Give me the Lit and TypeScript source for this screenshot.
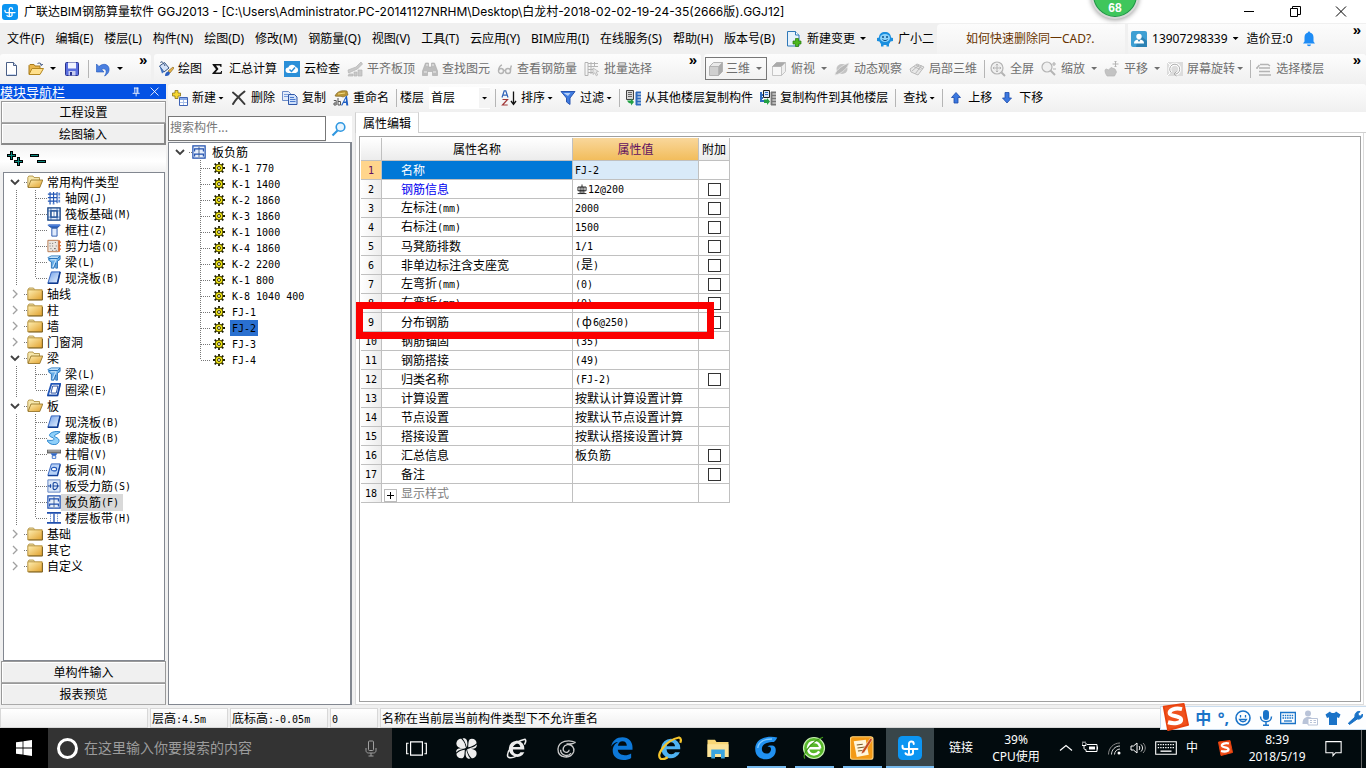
import { LitElement, html, svg, css, nothing } from "lit";
import { customElement, state } from "lit/decorators.js";
import { classMap } from "lit/directives/class-map.js";

/* ---------- icon drawings, all on a 16 x 16 grid ---------- */
const G = "#b4b4b4";
const icons: Record<string, unknown> = {
  app: svg`<rect width="16" height="16" rx="3" fill="#0c95f2"/><path d="M7.300 11.500V5.300a1.600 1.600 0 0 1 3.200 0M3 6.500v.6a1.500 1.500 0 0 0 1.500 1.500h8.500M5 11.500c.6 1.400 4.400 1.400 5 0V8.600" fill="none" stroke="#fff" stroke-width="1.300" stroke-linecap="round"/>`,
  newDoc: svg`<path d="M2.500 1.500h7l3 3v10h-10z" fill="#fff" stroke="#4a5f86"/><path d="M9.500 1.500v3h3" fill="#cfdcf2" stroke="#4a5f86"/><path d="M3.500 13.500h8" stroke="#c5d4ee"/>`,
  open: svg`<path d="M1 13V4.500L2 3.500h4l1 1.500h5v3" fill="#e9b64c" stroke="#a77a1c"/><path d="m1 13.500 3-6h11.500l-3.500 6z" fill="#ffe08c" stroke="#b4871f"/><path d="M9.500 2.500c2-1 3.500-.5 4 1.500M12 3.500l1.600 1 1.200-1.500" fill="none" stroke="#4a5f86"/>`,
  save: svg`<rect x="1.500" y="1.500" width="13" height="13" rx="1" fill="#5a6ede" stroke="#28338f"/><path d="M4 1.500h8v6H4z" fill="#f2f4ff"/><path d="M4.500 10h7v4.500h-7z" fill="#c8cdf0"/><path d="M6 11h2v3.500H6z" fill="#28338f"/>`,
  undo: svg`<path d="M4 5.500c5-4.500 11-1.500 10 4-.3 2.500-2.300 4.500-4.500 5.500 2-2.500 2.500-6 0-7-1.200-.4-2 .1-2.700.6L9 11H1.500V3z" fill="#4a7fe0" stroke="#1f55b8" stroke-width=".6"/>`,
  paint: svg`<path d="M1.500 5l5-3.500 4.500 5.500-5 4z" fill="#d4e2f8" stroke="#35527f"/><path d="M3 2c-1-2 2-2 4 3" fill="none" stroke="#35527f"/><path d="M1.500 5l4.500 6-2 1.500z" fill="#3d72c4"/><path d="m10 10 5-4 1 1-4 5z" fill="#e9b64c" stroke="#7d5c17" stroke-width=".6"/><path d="M7 15c0-3 1.500-4.500 3.500-4.500l1.500 1.500c-.5 2-2 3.500-5 3z" fill="#2a5fc0"/>`,
  sigma: svg`<path d="M3.500 3h9v3h-1c-.2-1-.6-1.500-1.500-1.500H7L9.500 8 6.500 11.500H10.500c1 0 1.400-.6 1.600-1.600h1L12.700 13H3.300v-.8L7 8.200 3.500 3.800z" fill="#111"/>`,
  cloud: svg`<rect width="16" height="16" fill="#2a8fd8"/><path d="M4.500 12a2.800 2.800 0 0 1-.3-5.600 4 4 0 0 1 7.500-.3 3 3 0 0 1 0 5.900z" fill="#fff"/><path d="m5.500 8.500 2 2 3.500-4" fill="none" stroke="#2a8fd8" stroke-width="1.500"/>`,
  align: svg`<path d="M1 9l8-3 5-5 1.500 2-5 5-9 4zM2 13h4v2H1zM7 11h3v4H7zM11 9h4v6h-4z" fill="#c9c9c9" stroke="${G}" stroke-width=".7"/>`,
  binoc: svg`<path d="M3.500 2h3v4h3V2h3l3 8v4.500h-5v-4h-5v4h-5V10z" fill="#bdbdbd" stroke="#a9a9a9" stroke-width=".6"/><path d="M2 11h3M11 11h3M4 4h2M10 4h2" stroke="#eee"/>`,
  glasses: svg`<g fill="none" stroke="${G}" stroke-width="1.400"><circle cx="4" cy="10" r="2.500"/><circle cx="11" cy="10" r="2.500"/><path d="M6.500 9.500h2M1.500 9.500C2 6 3 4.500 5 4M13.500 9.500c0-3 .3-4 1-5"/></g>`,
  batch: svg`<path d="M1 1.500h3v13H1zM4 2.500h10M4 5.500h10M4 8.500h5M4 11.500h5M7 1v12M10.500 1v5" fill="none" stroke="${G}"/><path d="m9 7 5.500 3.500-2.300.5 1.500 3-1.400.8-1.500-3L9 13.500z" fill="#e9e9e9" stroke="${G}" stroke-width=".8"/>`,
  cube: svg`<path d="M1.500 5.500h9v9h-9z" fill="#cfcfcf" stroke="${G}"/><path d="m1.500 5.500 4-4h9l-4 4z" fill="#e9e9e9" stroke="${G}"/><path d="m10.500 5.500 4-4v9l-4 4z" fill="#ababab" stroke="${G}"/>`,
  topView: svg`<path d="M1.500 5.500h9v9h-9z" fill="#f7f7f7" stroke="#c5c5c5"/><path d="m1.500 5.500 4-4h9l-4 4z" fill="#aaa" stroke="${G}"/><path d="m10.500 5.500 4-4v9l-4 4z" fill="#eee" stroke="#c5c5c5"/>`,
  orbit: svg`<ellipse cx="8" cy="8" rx="5.500" ry="5" fill="#c4c4c4"/><path d="M1 14c0-3 5-9 14-12-1 4-7 11-14 12z" fill="#b9b9b9" stroke="#e6e6e6" stroke-width=".8"/>`,
  local3d: svg`<g fill="#e8e8e8" stroke="${G}" stroke-width=".9"><path d="m1 8 7-5 7 3-6 8-7-3z"/><path d="m4.500 5.500 7 3M7 4l7 4M3 10l7-6M6.500 12.500l6-8"/></g>`,
  fullscreen: svg`<circle cx="7" cy="7" r="6" fill="#f0f0f0" stroke="${G}" stroke-width="1.200"/><path d="M7 3v8M3 7h8M5.800 4.200 7 3l1.200 1.200M5.800 9.800 7 11l1.200-1.200M4.200 5.800 3 7l1.200 1.200M9.800 5.800 11 7 9.800 8.200" fill="none" stroke="${G}"/><path d="m11.500 11.500 3.500 3.500" stroke="${G}" stroke-width="2"/>`,
  zoom: svg`<circle cx="6" cy="6" r="5" fill="#f0f0f0" stroke="${G}" stroke-width="1.200"/><path d="m9.500 9.500 4.500 4.500" stroke="${G}" stroke-width="2"/><path d="M11 3h4M13 1v4M12 8h3" stroke="${G}" stroke-width="1.200"/>`,
  pan: svg`<path d="M3 15c-2-3-3-7-.5-7l2 1L7 6.500l4 1.500 1.500 3-2 4z" fill="#c3c3c3" stroke="${G}" stroke-width=".7"/><path d="M11.500 0v6M8.500 3h6M10.500 1l1-1 1 1M10.500 5l1 1 1-1" stroke="${G}" fill="none"/>`,
  rotate: svg`<path d="M0 1h16v14H0z" fill="#dcdcdc"/><path d="M4 11.500a5 5 0 1 1 5 1.500" fill="none" stroke="#fff" stroke-width="3"/><path d="M4 11.500a5 5 0 1 1 5 1.500M9.500 10.500 7 13l2.500 2" fill="none" stroke="#aaa"/><path d="M0 1l3 3M0 15l3-3" stroke="#fff"/>`,
  floors: svg`<path d="M4 3.500h8l2 1.500M3 7h11M3 10.500h11M3 14h12M1 7l2.500-3M1 6v2" fill="none" stroke="${G}" stroke-width="1.500"/>`,
  add: svg`<path d="M3 .5h3v2.500h2.500v3H6v2.500H3V6H.5V3H3z" fill="#f5d633" stroke="#8a7411" stroke-width=".8"/><path d="M7.500 7.500h8v8h-8z" fill="#fff" stroke="#3e63b4"/><path d="M8 8h7v2H8z" fill="#86a8e8"/><path d="M8 12.500h7M11.500 10v5" stroke="#a9c0ea"/>`,
  del: svg`<path d="M2 2.500c4 3 8 7 11.500 11.500M13.500 1.500C9 5 5 9 2 14" fill="none" stroke="#3a3a3a" stroke-width="2" stroke-linecap="round"/>`,
  copy: svg`<path d="M.5 1.500h6l2 2v7h-8z" fill="#e3ecfb" stroke="#6c8cc8"/><path d="M2 4.500h4M2 6.500h4" stroke="#7da0dc"/><path d="M6.500 4.500h6l2.500 2.500v7.500H6.500z" fill="#cfe0fa" stroke="#2f57a8"/><path d="M8 7.500h4M8 9.500h5.500M8 11.500h5.500" stroke="#4a79cc"/>`,
  rename: svg`<path d="M2 6C4 1 9 0 14 1l1 4-5 2c-3-1.500-5 0-8-1z" fill="#b89436" stroke="#776022" stroke-width=".6"/><path d="M5 4l7-1" stroke="#f2dc84"/><path d="M.8 10.500h2.400V15H1v-2h2M5 8v7h2.500v-3.500H5" fill="none" stroke="#555"/><path d="M8 15.500 13 6h1l1.300 9.500h-2l-.3-2.500h-2.500l-1.200 2.500zM11.200 11.500H13l-.2-3z" fill="#1f5fc4"/>`,
  sort: svg`<path d="M1 7.500 3.200.8h1.600L7 7.500M2 5.200h4" fill="none" stroke="#2f62b8" stroke-width="1.200"/><path d="M1.500 9.500h5l-5 5.500h5.200" fill="none" stroke="#a23a3a" stroke-width="1.200"/><path d="M12.500 1.500v12M10 11l2.500 3.500L15 11" fill="none" stroke="#111" stroke-width="1.300"/>`,
  filter: svg`<path d="M1 1.500h14L10 8v6.500L6.500 12V8z" fill="#3f7be0" stroke="#2a56b0"/><path d="M3.500 3h7L8 6z" fill="#b6d0f8"/>`,
  copyFrom: svg`<path d="M1.500.5h7v9h-7z" fill="#d8d8d8" stroke="#444"/><path d="M3 2.500h4M3 4.500h4M3 6.500h4" stroke="#666"/><path d="m2 10.500 4 0v-2l3 3.500-3 3.500v-2c-2 0-3-1-4-3z" fill="#23a045"/><path d="M11.500 2v13M11 2.500h5M11 5.500h5M11 8.500h5M11 11.500h5M11 14.500h5" stroke="#2f6cc0" stroke-width="2"/>`,
  copyTo: svg`<path d="M3.500.5h6v7h-6z" fill="#dce8fa" stroke="#222"/><path d="M5 2.500h3M5 4.500h3" stroke="#2f6cc0"/><path d="M1 2v9l3 0M1 5h2M1 8h2" stroke="#2f6cc0" stroke-width="2" fill="none"/><path d="M4 9.500h3V8l3 3.500L7 15v-2H4z" fill="#23a045"/><path d="M11.500 2v13M11 2.500h5M11 5.500h5M11 8.500h5M11 11.500h5M11 14.500h5" stroke="#777" stroke-width="1.800"/>`,
  up: svg`<path d="m8 2.500 4.500 5H10V13H6V7.500H3.500z" fill="#3b78e0" stroke="#1d4aa8" stroke-width=".8"/>`,
  down: svg`<path d="m8 13 4.500-5H10V2.500H6V8H3.500z" fill="#3b78e0" stroke="#1d4aa8" stroke-width=".8"/>`,
  change: svg`<path d="M1.500.5h8l3.500 3.500v11h-11.500z" fill="#e6f2fc" stroke="#2f78b8"/><path d="M9.500.5v3.500H13" fill="#fff" stroke="#2f78b8"/><path d="M9.500 7.500h3v2.500H15v3h-2.500v2.500h-3V13H7v-3h2.500z" fill="#4cb81f" stroke="#27790c" stroke-width=".7"/>`,
  robot: svg`<path d="M2 6.500C2 3 4.500 1 8 1s6 2 6 5.500L16 7v3l-2.500.5c-.3 1-.8 1.800-1.500 2.500v2.500H9.500V14h-3v1.500H4V13c-.7-.7-1.200-1.500-1.500-2.500L0 10V7z" fill="#1b8fdf"/><ellipse cx="8" cy="7" rx="5" ry="4" fill="#8fd4fb"/><circle cx="6" cy="6" r="1" fill="#0d4f88"/><circle cx="10" cy="6" r="1" fill="#0d4f88"/><path d="M5.500 8.500c1.500 1.500 3.500 1.500 5 0" fill="none" stroke="#0d4f88"/>`,
  user: svg`<rect width="16" height="16" rx="2" fill="#3d9fd3"/><path d="m8 3 8 7v6H5z" fill="#2c82b4"/><circle cx="8" cy="5.500" r="2.700" fill="#fff"/><path d="M3 12.500c0-3 2-4 5-4s5 1 5 4z" fill="#fff"/><path d="m6.800 9 1.200 2 1.200-2" fill="#2c82b4"/>`,
  bell: svg`<path d="M8 .5c.8 0 1 .5 1 1 2.500.7 3.500 2.500 3.500 5v4l1.500 2H2l1.500-2v-4c0-2.500 1-4.300 3.500-5 0-.5.200-1 1-1zM6 13.500h4c0 2.300-4 2.300-4 0z" fill="#1e8cf5"/>`,
  folder: svg`<path d="M1 3.500 2 2h4.500l1 1.500" fill="#f3e3a8" stroke="#a88836" stroke-width=".8"/><path d="M.8 3.800h14.400v10H.8z" fill="url(#gold)" stroke="#a67c1c" stroke-width=".8"/><path d="M1.500 14h14V5" fill="none" stroke="#6f5418" stroke-width=".8"/>`,
  folderOpen: svg`<path d="M.8 13V3.500l1-1.500H6l1 1.500h5.500V7" fill="#f6e7ac" stroke="#a88836" stroke-width=".8"/><path d="m1 13.500 3-7.500h11.800l-3 7.500z" fill="url(#gold)" stroke="#8c6a1c" stroke-width=".8"/>`,
  axis: svg`<path d="M3.500 1v13M7.500 1v13M11.500 1v13M1 3.500h11M1 7.500h11M1 11.500h11" stroke="#2256b4" stroke-width="1.300"/><path d="M13 2h2v3h-2zM13 6.500h2v2h-2zM13 10h2v3h-2zM2.500 13.500h2v2h-2zM6.500 13.500h2v2h-2z" fill="#5c86d0"/>`,
  raft: svg`<path d="M1 1h14v14H1z" fill="#dfeafa" stroke="#123f80" stroke-width="1.500"/><path d="M4.500 4.500h7v7h-7z" fill="#fff" stroke="#123f80" stroke-width="1.500"/><path d="M1 4.500h14M1 11.500h14M4.500 1v14M11.500 1v14M8 4v8" stroke="#2a5faa" stroke-width=".8"/>`,
  column: svg`<path d="M1 2.500h14l-3 3H5z" fill="#2c66c8" stroke="#0f3780" stroke-width=".8"/><path d="M2 1.500h13v2H1z" fill="#4f7fd6"/><path d="M5.500 6h6v9h-6z" fill="#dfeafc" stroke="#1c4ea8"/>`,
  wall: svg`<path d="M1 1.500h12v13H1z" fill="#ece6e0" stroke="#b27044"/><path d="M14 1.500v13M14 3.500h2M14 7.500h2M14 11.500h2" fill="none" stroke="#e0682c" stroke-width="1.500"/><path d="M3 5h1M6 8h1M9 4h1M4 11h1M8 11h2M10 8h1M6 5h1M3 8h1M6 13h1M10 13h1" stroke="#555"/>`,
  beam: svg`<path d="m1 3 4-2h10l-3 3H2z" fill="#bfe0fa" stroke="#2a7cc4"/><path d="M2 4h10l3-3v4l-3 2v8h-2V9L8 15H5V8L2 6z" fill="#66aee8" stroke="#1c66b0" stroke-width=".9"/><path d="M4 5.500h7M6.500 14 10 6" stroke="#e8f5ff"/>`,
  slab: svg`<path d="M5 1h10l-3 13H1z" fill="url(#blue)" stroke="#2257b8"/><path d="M1 14h11l3-13" fill="none" stroke="#0f3b90" stroke-width="1.800"/>`,
  ring: svg`<path d="M5 1h10l-3 13H1z" fill="#fff" stroke="#2257b8" stroke-width="2"/><path d="M1 14.500h11l3.300-13M6.500 3.500h6l-2 8h-6z" fill="none" stroke="#123f98"/>`,
  spiral: svg`<path d="M15 1C9-.5 2 2 3 5.500c.6 2 5 1.500 5 3.500s-3 2-8 1.500c1 3 5 5.500 9 5s6-4 4-6.500c-1.500-2-5-1.800-4.500-3.500.5-1.500 3-1.500 6.500-4.500z" fill="#8fd0fa" stroke="#1d7cc8"/>`,
  cap: svg`<path d="M0 3.500h16v3.500H0z" fill="#7b7b7b" stroke="#444" stroke-width=".6"/><path d="M1 4.500h14" stroke="#ccc"/><path d="m4 7 2 3h4l2-3z" fill="#2f67c6"/><path d="M6 10h4v3H6z" fill="#fff" stroke="#2f67c6"/>`,
  hole: svg`<path d="M5 1h10l-3 13H1z" fill="#b7d1f6" stroke="#2257b8"/><path d="M1 14.500h11l3.300-13" fill="none" stroke="#123f98" stroke-width="1.500"/><ellipse cx="8" cy="7" rx="3" ry="2" fill="#fff" stroke="#2257b8" stroke-width="1.200"/>`,
  stress: svg`<path d="M1 1h14v14H1z" fill="#dce8f8" stroke="#5579bd"/><path d="M1 8h4M4 6v4M12 5.500c-1-2-5-2-5 0v5.500c1 2 4 1.500 5-2V6M7 8h7" fill="none" stroke="#17479e" stroke-width="1.300"/>`,
  negative: svg`<path d="M1 1h14v14H1z" fill="#e7effb" stroke="#1f4fae" stroke-width="1.400"/><path d="M8 1v14" stroke="#8a9cba" stroke-width="1.800"/><path d="M3 7.500V4.500h10v3M3 13V10.500h10V13" fill="none" stroke="#1f4fae" stroke-width="1.300"/>`,
  band: svg`<path d="M0 2h16M0 13.500h16" stroke="#1f4fae" stroke-width="2"/><path d="M4 2v11M12 2v11" stroke="#3c68bc" stroke-dasharray="1 1"/><path d="M8 3v10" stroke="#1f4fae" stroke-width="1.500"/>`,
  gear: svg`<path d="M8 0v16M0 8h16M2.300 2.300l11.400 11.400M13.700 2.300l-11.400 11.400" stroke="#1a1a00" stroke-width="2.400"/><circle cx="8" cy="8" r="5.200" fill="#f5ea14" stroke="#3b3800" stroke-width="1.200"/><circle cx="8" cy="8" r="2" fill="#fff" stroke="#3b3800" stroke-width="1.300"/>`,
  search: svg`<circle cx="9.500" cy="6" r="4.300" fill="#e8f5ff" stroke="#2f97e0" stroke-width="1.600"/><path d="m6.500 9.500-5 5" stroke="#2f97e0" stroke-width="2.200"/>`,
  plusPlus: svg`<path d="M4.500 0v9M0 4.500h9" stroke="#000" stroke-width="3"/><path d="M11.500 6v9M7 10.500h9" stroke="#000" stroke-width="3"/><path d="M4.500 1v7M1 4.500h7M11.500 7v7M8 10.500h7" stroke="#0c8a80"/>`,
  minusMinus: svg`<path d="M0 4.500h9M7 10.500h9" stroke="#000" stroke-width="3"/><path d="M1 4.500h7M8 10.500h7" stroke="#0c8a80"/>`,
  pin: svg`<path d="M5.500 3v6M4.500 3.500h5M3 9.500h8M7 9.500V13M9 3v6M8 3v6" stroke="#fff" fill="none"/>`,
  cross: svg`<path d="m3 3 9 9M12 3l-9 9" stroke="#fff" fill="none"/>`,
  rebar: svg`<path d="M8 0v15M1 14.500h14M1.500 4h13v6h-13zM5 4v10M11 4v10" fill="none" stroke="#000" stroke-width="1.300"/>`,
  /* taskbar */
  start: svg`<path d="M0 2.300 6.600 1.400V7.600H0zM7.400 1.300 16 0v7.600H7.400zM0 8.400h6.600v6.200L0 13.700zM7.400 8.400H16V16l-8.600-1.300z" fill="#fff"/>`,
  mic: svg`<g fill="none" stroke="#a0a0a0"><rect x="5.500" y=".5" width="5" height="9.500" rx="1"/><path d="M3 7.500V10c0 1.500 1 2.500 2.500 2.500h5c1.500 0 2.500-1 2.500-2.500V7.500M8 12.500v3M5.500 15.500h5"/></g>`,
  taskView: svg`<g fill="none" stroke="#fff" stroke-width=".9"><path d="M3.500 3h9v10h-9zM2 4H.5v8H2M14 4h1.500v8H14"/></g>`,
  pinwheel: svg`<g fill="#eee"><path d="M7.600 7.600C3 8.300.3 7 .3 4.200.3 2 2 .5 4 .5 6.500 3 7 5 7.600 7.600z"/><path d="M5 .4C9-.5 9 4 8.300 7.200 7.500 5 7 2.500 5 .4z"/><path d="M9.300 7C9.500 3 9.500.5 12 .5c2.200 0 3.700 1.500 3.700 3.500C14 5.800 12 6.500 9.300 7z"/><path d="M15.800 5c.5 3.500-3.500 3.500-7 3.200C11.500 7.500 14 7 15.800 5z"/><path d="M8.400 8.600c4.600-.7 7.300.4 7.300 3.200 0 2.200-1.700 3.700-3.700 3.700-2.500-2.500-3-4.300-3.600-6.900z"/><path d="M11 15.700c-4 .8-4-3.700-3.300-6.900.8 2.200 1.300 4.800 3.300 6.900z"/><path d="M6.700 9c-.2 4-.2 6.500-2.700 6.500C1.800 15.500.3 14 .3 12 2 10.200 4 9.500 6.700 9z"/><path d="M.2 11c-.5-3.500 3.500-3.300 7-3-2.700.6-5.200 1-7 3z"/></g>`,
  eWhite: svg`<path d="M8 2a6 6 0 0 1 6 6.800H5.200C5.400 11 6.500 12.300 8.500 12.300c1.200 0 2-.5 2.500-1.500h3A6.200 6.200 0 1 1 8 2zM5.300 6.800h5.600C10.600 5 9.600 4.200 8 4.200S5.600 5 5.300 6.800z" fill="#eee"/><path d="M1.500 14.500C0 11 5 3 14.500 1c1 1 .5 2.500-.5 4M1.500 14.500c1.500.8 4 .5 6-.5" fill="none" stroke="#eee" stroke-width="1.200"/>`,
  swirl: svg`<g fill="none" stroke="#ccc"><path d="M15 3.500C10 1 2 2 1.500 8.500c0 7 9.500 8 12 2 .8-3-1.500-6-5-5.500-3 .5-4 4-2 5.500 1.500 1 3.500.2 3.500-1.500M14.500 3.500c-2 1.500-4 1-6.500 1M3.500 9c0 4 5 6 8 2.500"/></g>`,
  edge: svg`<path d="M.8 7C1.500 3 4.500.8 8.300.8 12.500.8 15 4 15 7.500v1.700H5.200c.2 2.500 2.300 3.600 4.700 3.600 1.600 0 3-.5 4.200-1.200v3C12.800 15.500 11 16 9 16c-4.500 0-7.200-2.500-7.200-6.300 0-2.500 1.500-4.700 3.600-5.700C3.500 4 2 5 .8 7zM5.300 6.500h5.900c0-1.800-1-3-2.900-3-1.700 0-2.800 1.300-3 3z" fill="#0d78d8"/>`,
  ie: svg`<path d="M8.500 1.800a6.300 6.300 0 0 1 6.300 7H5.700c.2 2.200 1.300 3.300 3.200 3.300 1.200 0 2-.4 2.500-1.300h3.200A6.500 6.500 0 1 1 8.500 1.800zM5.800 6.800h5.600c-.3-1.800-1.300-2.600-2.800-2.600S6 5 5.800 6.800z" fill="#4fb3f2"/><path d="M1.500 15C-1 12 5 3 14 1c1.500.5 1.500 2 .8 3.500M1.500 15c1.500 1 3.500.2 5-.8" fill="none" stroke="#f5c52c" stroke-width="1.500"/>`,
  explorer: svg`<path d="M1 2.500h5l1 1.500h8v10H1z" fill="#f7d676"/><path d="M1 5.500h14V14H1z" fill="#fce49a"/><path d="M3.500 15V9h9v6h-2.500v-3H6v3z" fill="#3aa4e0"/>`,
  gBlue: svg`<path d="M15.500 1C10-.5 1 1 .8 8.500.8 14 5 15.800 8.500 15.500c3.500-.3 6-2.500 6-6 0-1.500-.5-2.500-1.500-3-1 0-3-.5-4 .5 2 0 2.500 1 2.300 2.300-.3 1.700-1.600 2.500-3.100 2.400C6 11.500 5 10 5.300 8c.5-3 4-4 8-4 1-.8 1.700-1.800 2.200-3z" fill="#2191f0"/><path d="M2.500 8C3 4 7 2 12 2" fill="none" stroke="#7cc8ff"/>`,
  eGreen: svg`<circle cx="8" cy="8" r="7" fill="#58b82a"/><circle cx="8" cy="8" r="7" fill="none" stroke="#c6eeb0" stroke-width=".8"/><path d="M11.500 10.300C10.500 12 9 12.300 8 12.300 5.500 12.300 4 10.500 4 8.200h8.300M4 8.200C4.200 5.500 5.800 4 8 4s4 1.500 4.200 4.200" fill="none" stroke="#fff" stroke-width="1.600"/><path d="M2 15C0 13 5 4 14 .8" fill="none" stroke="#3f9a18" stroke-width=".8"/>`,
  notes: svg`<rect x=".3" y=".5" width="15" height="15" rx="1.500" fill="#f39a16" stroke="#ffd27a" stroke-width=".8"/><path d="m2.500 3.500 8-1 2 10-8 1.500z" fill="#fff6dc"/><path d="m4.500 6 4-.5M5 8l5-.6M5.300 10l4-.5" stroke="#7a5a2a" stroke-width=".7"/><path d="m8 10 5.500-8.500 1.500.8L9.500 11l-2 1z" fill="#c54a1c" stroke="#fff" stroke-width=".3"/>`,
  chevUp: svg`<path d="m2 10.500 6-5 6 5" fill="none" stroke="#fff" stroke-width="1.200"/>`,
  battery: svg`<path d="M5 4.500h10v7H4v-2" fill="none" stroke="#fff"/><path d="M7 6.500h6v3H7z" fill="#fff"/><path d="M0 3v2.500h4V3M1 1.500V3M3 1.500V3M2 5.500v3c0 1 1 1 2 1" stroke="#fff" fill="none"/><path d="M15.500 6.500v3" stroke="#fff"/>`,
  wifi: svg`<g fill="none" stroke="#ddd" stroke-width="1"><path d="M2.500 14.500C2.500 8 7.500 3 14 3" stroke="#888"/><path d="M5.500 14.500C5.500 10 9 6 14 6M8.500 14.500C8.500 11.500 11 9 14 9"/></g><circle cx="13" cy="13" r="1.500" fill="#fff"/>`,
  volume: svg`<path d="M1 6h2.500L7 3v10l-3.500-3H1z" fill="none" stroke="#fff"/><path d="M9 6c1 1 1 3 0 4M11 4.500c2 2 2 5 0 7" fill="none" stroke="#fff"/><path d="M13 3c3 3 3 7 0 10" fill="none" stroke="#888"/>`,
  keys: svg`<path d="M.5 3.500h15v9H.5z" fill="none" stroke="#fff" stroke-width=".8"/><path d="M2 5.500h12M2 7.700h12" stroke="#fff" stroke-dasharray="1 .8"/><path d="M4 10.300h8" stroke="#fff"/>`,
  sogou: svg`<path d="M1.500 2 13 .5l2.500 12L4 15.500z" fill="#f0511c" stroke="#e8410e" stroke-linejoin="round"/><path d="M12 3.500C8 2.500 4.500 4 5 6c.5 1.800 6.500 1 6.500 3.500 0 2-4 2.500-7.500 1.500" fill="none" stroke="#fff" stroke-width="2.300"/>`,
  notice: svg`<path d="M.8 1.500h14.400v10.500H10l-2.500 2.800V12H.8z" fill="none" stroke="#fff"/>`,
  /* input-method bar */
  smile: svg`<circle cx="8" cy="8" r="7" fill="none" stroke="#1a73c8" stroke-width="1.600"/><path d="M5.500 5v2.500M10.500 5v2.500M4.500 9.500c1.500 3 5.500 3 7 0z" stroke="#1a73c8" stroke-width="1.300" fill="none"/>`,
  imeMic: svg`<rect x="5" y="0" width="6" height="10" rx="3" fill="#1a73c8"/><path d="M2.500 6.500c0 7 11 7 11 0M8 12v3M5 15.300h6" fill="none" stroke="#1a73c8" stroke-width="1.500"/>`,
  imeKeys: svg`<path d="M.5 2.500h15v11H.5z" fill="none" stroke="#1a73c8" stroke-width="1.600"/><path d="M2.500 5.500h11M2.500 8h11" stroke="#1a73c8" stroke-width="1.300" stroke-dasharray="1.500 .8"/><path d="M4 11h8" stroke="#1a73c8" stroke-width="1.300"/>`,
  person: svg`<circle cx="6" cy="3.500" r="3" fill="#b8c3d8"/><path d="M.5 14c0-5 2-7 5.500-7s4 1 4 2v5z" fill="#b8c3d8"/><path d="M6 8.500h9.500v6.500H6z" fill="#fff" stroke="#b8c3d8"/><path d="M8 10.500h2M8 12.500h2M11.500 10.500h2.500M11.500 12.500h2.500" stroke="#b8c3d8"/>`,
  shirt: svg`<path d="M5 1.500c1 2 5 2 6 0l4.500 3-1.500 3.500-2-.8V15H4V7.200L2 8 .5 4.500z" fill="#1a73c8"/>`,
  wrench: svg`<path d="m2.500 14.500-1.200-1.200L8 7C7.300 3.500 10 .8 13 1.500L11 3.800l.6 1.800 1.800.6L15.500 4c.7 3-2 5.800-5.300 5z" fill="#1a73c8" stroke="#1a73c8" stroke-linejoin="round" stroke-width="1"/>`,
};

const icon = (name: string, cls = "") =>
  html`<svg class="ico ${cls}" viewBox="0 0 16 16" aria-hidden="true">${icons[name]}</svg>`;

/* Latin runs in the dialog font are half as wide as the Chinese glyphs; the bar-grade sign takes a full cell. */
const mix = (text: string) =>
  text.split(/([\x21-\x7e][\x20-\x7e]*|\u0444)/).map((part, i) =>
    i % 2 ? html`<span class=${part === "ф" ? "full" : "half"}>${part}</span>` : part);

interface Tool { icon?: string; label?: string; arrow?: boolean; tight?: boolean; sep?: boolean; floor?: boolean; boxed?: boolean; }

const menus = ["文件(F)", "编辑(E)", "楼层(L)", "构件(N)", "绘图(D)", "修改(M)", "钢筋量(Q)", "视图(V)", "工具(T)",
  "云应用(Y)", "BIM应用(I)", "在线服务(S)", "帮助(H)", "版本号(B)"];

const drawTools: Tool[] = [
  { icon: "paint", label: "绘图" }, { icon: "sigma", label: "汇总计算" }, { icon: "cloud", label: "云检查" },
];
const drawToolsOff: Tool[] = [
  { icon: "align", label: "平齐板顶" }, { icon: "binoc", label: "查找图元" },
  { icon: "glasses", label: "查看钢筋量" }, { icon: "batch", label: "批量选择" },
];
const viewTools: Tool[] = [
  { icon: "topView", label: "俯视", arrow: true }, { icon: "orbit", label: "动态观察" }, { icon: "local3d", label: "局部三维" },
  { sep: true }, { icon: "fullscreen", label: "全屏" }, { icon: "zoom", label: "缩放", arrow: true },
  { icon: "pan", label: "平移", arrow: true }, { icon: "rotate", label: "屏幕旋转", arrow: true, tight: true },
  { sep: true }, { icon: "floors", label: "选择楼层" },
];
const partTools: Tool[] = [
  { icon: "add", label: "新建", arrow: true, tight: true }, { icon: "del", label: "删除" }, { icon: "copy", label: "复制" },
  { icon: "rename", label: "重命名" }, { sep: true }, { floor: true }, { sep: true },
  { icon: "sort", label: "排序", arrow: true, tight: true }, { icon: "filter", label: "过滤", arrow: true, tight: true },
  { sep: true }, { icon: "copyFrom", label: "从其他楼层复制构件" }, { icon: "copyTo", label: "复制构件到其他楼层" },
  { sep: true }, { label: "查找", arrow: true, tight: true }, { sep: true },
  { icon: "up", label: "上移" }, { icon: "down", label: "下移" },
];

interface Group { name: string; items?: [string, string][]; }
const tree: Group[] = [
  { name: "常用构件类型", items: [["axis", "轴网(J)"], ["raft", "筏板基础(M)"], ["column", "框柱(Z)"], ["wall", "剪力墙(Q)"], ["beam", "梁(L)"], ["slab", "现浇板(B)"]] },
  { name: "轴线" }, { name: "柱" }, { name: "墙" }, { name: "门窗洞" },
  { name: "梁", items: [["beam", "梁(L)"], ["ring", "圈梁(E)"]] },
  { name: "板", items: [["slab", "现浇板(B)"], ["spiral", "螺旋板(B)"], ["cap", "柱帽(V)"], ["hole", "板洞(N)"], ["stress", "板受力筋(S)"], ["negative", "板负筋(F)"], ["band", "楼层板带(H)"]] },
  { name: "基础" }, { name: "其它" }, { name: "自定义" },
];

const parts = ["K-1 770", "K-1 1400", "K-2 1860", "K-3 1860", "K-1 1000", "K-4 1860", "K-2 2200", "K-1 800",
  "K-8 1040 400", "FJ-1", "FJ-2", "FJ-3", "FJ-4"];

interface Prop { name: string; value: string; box?: boolean; kind?: string; }
const props: Prop[] = [
  { name: "名称", value: "FJ-2", kind: "current" },
  { name: "钢筋信息", value: "12@200", box: true, kind: "key" },
  { name: "左标注(mm)", value: "2000", box: true },
  { name: "右标注(mm)", value: "1500", box: true },
  { name: "马凳筋排数", value: "1/1", box: true },
  { name: "非单边标注含支座宽", value: "(是)", box: true },
  { name: "左弯折(mm)", value: "(0)", box: true },
  { name: "右弯折(mm)", value: "(0)", box: true },
  { name: "分布钢筋", value: "(ф6@250)", box: true },
  { name: "钢筋锚固", value: "(35)" },
  { name: "钢筋搭接", value: "(49)" },
  { name: "归类名称", value: "(FJ-2)", box: true },
  { name: "计算设置", value: "按默认计算设置计算" },
  { name: "节点设置", value: "按默认节点设置计算" },
  { name: "搭接设置", value: "按默认搭接设置计算" },
  { name: "汇总信息", value: "板负筋", box: true },
  { name: "备注", value: "", box: true },
  { name: "显示样式", value: "", kind: "group" },
];

@customElement("app-root")
export class AppRoot extends LitElement {
  @state() private part = "FJ-2";
  @state() private kind = "板负筋(F)";

  static styles = css`
    :host { display: flex; flex-direction: column; height: 100vh; position: relative; overflow: hidden; background: #f0f0f0; color: #000;
      font: 12px/16px "Noto Sans", "Noto Sans CJK SC", sans-serif; white-space: nowrap; }
    * { box-sizing: border-box; }
    button, input, select { font: inherit; color: inherit; margin: 0; padding: 0; border: 0; background: none; border-radius: 0; }
    ul { list-style: none; margin: 0; padding: 0; }
    .ico { width: 16px; height: 16px; flex: none; display: block; }
    .defs { position: absolute; width: 0; height: 0; }
    .half { font-family: "DejaVu Sans Mono", monospace; font-size: 10px; white-space: pre; }
    .full { display: inline-block; width: 12px; text-align: center; line-height: 14px; }
    .grow { flex: 1; }
    .arrow { width: 6px; height: 3px; flex: none; background: currentColor; clip-path: polygon(0 0, 100% 0, 50% 100%); }
    .more { align-self: flex-start; font: bold 15px/12px "Liberation Sans", sans-serif; width: 12px; text-align: center; color: #000; }

    .title { height: 23px; flex: none; display: flex; align-items: center; gap: 6px; padding: 0 17px 0 2px; background: #fff; }
    .title h1 { font: 12px/16px "Inter", "Noto Sans CJK SC", sans-serif; margin: 0; flex: 1; }
    .winbtns { display: flex; gap: 30px; }
    .winbtns button, .winbtns svg { width: 16px; height: 16px; display: block; }
    .ball { position: absolute; left: calc(100% - 275px); top: -29px; width: 48px; height: 48px; border-radius: 50%; background: #3fc65c;
      border: 2px solid #d8d8d8; box-shadow: inset 0 0 0 1px #23904a, 0 1px 5px #0006; color: #fff; font: bold 12px/14px "Liberation Sans", sans-serif;
      text-align: center; padding-top: 28px; z-index: 2; }

    .menubar { height: 31px; flex: none; display: flex; align-items: center; }
    .menubar nav { display: flex; align-items: center; gap: 11px; padding-left: 7px; }
    .extra { display: flex; align-items: center; gap: 5px; }
    .news, .account { height: 30px; display: flex; align-items: center; background: linear-gradient(#fcfcfc, #f2f2f2); }
    .news { margin-left: 3px; width: 188px; padding-left: 29px; color: #683400; border-radius: 4px 0 0 0; text-decoration: none; }
    .account { flex: 1; margin-left: 3px; padding: 0 3px; gap: 8px; }
    .bar { height: 29px; flex: none; display: flex; gap: 3px; }
    .strip { display: flex; align-items: center; gap: 7px; padding: 0 4px; background: linear-gradient(#fdfdfd, #f0f0f0); border-radius: 3px; }
    .strip.file { width: 151px; gap: 8px; padding-left: 4px; }
    .strip.draw { flex: 0 0 547px; padding-right: 2px; }
    .strip.view { flex: 1; padding-left: 1px; padding-right: 3px; }
    .off { color: #6f6f6f; }
    .tool { display: flex; align-items: center; gap: 4px; }
    .tool .arrow { margin-left: 2px; }
    .tool.tight .arrow { margin-left: -2px; }
    .tool.bare { padding-left: 2px; }
    .sep { width: 1px; height: 18px; background: #b5b5b5; margin-right: -2px; flex: none; }
    .boxed { height: 23px; border: 1px solid #777; padding: 0 4px 0 2px; gap: 2px; margin-right: -3px; }
    .boxed .arrow { margin-left: 4px; }
    .floor { display: flex; align-items: center; gap: 5px; margin: 0 -2px; }
    .combo { display: flex; align-items: center; width: 61px; height: 22px; background: #fff; }
    .combo select { appearance: none; flex: 1; min-width: 0; padding-left: 2px; outline: 0; }
    .combo .drop { width: 11px; height: 20px; background: #f4f4f4; display: grid; place-items: center; }

    .body { flex: 1; min-height: 0; display: flex; gap: 2px; padding: 1px 0 3px; }
    .song { font-family: "Noto Sans CJK SC", sans-serif; }
    .nav { width: 166px; flex: none; display: flex; flex-direction: column; }
    .nav h2 { margin: 0 0 2px; height: 15px; font-size: 13px; line-height: 14px; font-weight: 400; color: #fff; background: #0452e4; display: flex; align-items: center; }
    .nav h2 span { flex: 1; }
    .nav h2 button { width: 18px; }
    .nav h2 svg { width: 14px; height: 14px; }
    .page { height: 22px; flex: none; margin-left: 1px; border: 1px solid #999; border-bottom-color: #aaa; background: #f0f0f0; box-shadow: inset 1px 1px #fff; }
    .page.open { height: 22px; border-bottom: 2px solid #888; border-right: 2px solid #888; }
    .exp { display: flex; gap: 7px; align-items: center; height: 27px; flex: none; padding-left: 7px; background: linear-gradient(#f4f4f4, #fff 60%, #f2f2f2); }
    .tree { flex: 1; min-height: 0; overflow: hidden; margin: 0 1px 0 3px; padding-top: 1px; border: 1px solid #828790; background: #fff; }
    .row { display: flex; align-items: center; height: 16px; }
    .row.root { padding-left: 6px; }
    .row .chev { width: 10px; height: 10px; flex: none; }
    .hdots { height: 1px; flex: none; background: repeating-linear-gradient(90deg, #777 0 1px, transparent 1px 2px); }
    .vdots { width: 1px; height: 16px; flex: none; background: repeating-linear-gradient(#777 0 1px, transparent 1px 2px); }
    .root .hdots { width: 3px; margin: 0 0 0 4px; }
    .root .txt { padding-left: 4px; }
    .row .trunk { margin-left: 12px; }
    .row .branch { margin-left: 18px; }
    .row .twig { width: 11px; }
    .row:last-child > .branch { height: 8px; align-self: flex-start; }
    .row .txt { line-height: 16px; padding: 0 4px; text-align: left; }
    .row .txt.sel { background: #d9d9d9; }
    .row .half { vertical-align: 1px; }
    .row > .twig + .ico { width: 14px; height: 14px; }

    .work { flex: 1; min-width: 0; display: flex; flex-direction: column; }
    .work > .strip { height: 28px; flex: none; }
    .panes { flex: 1; min-height: 0; display: flex; gap: 3px; }
    .parts { width: 184px; flex: none; display: flex; flex-direction: column; }
    .find { height: 30px; flex: none; display: flex; padding: 4px 0 0; }
    .find input { width: 158px; height: 25px; border: 1px solid #777; padding: 0 1px 4px; background: #fff; }
    .find button { flex: 1; background: #fff; display: grid; place-items: center; }
    ::placeholder { color: #777; opacity: 1; }
    .list { flex: 1; border: 1px solid #828790; border-right-width: 2px; background: #fff; padding-top: 1px; }
    .list .root .ico { width: 14px; height: 14px; margin-right: 2px; }
    .list .branch { margin-left: 31px; }
    .list .twig { width: 10px; }
    .list .leaf .ico { width: 12px; height: 12px; margin-left: 2px; }
    .list .leaf .txt { margin-left: 5px; padding: 0 2px; height: 16px; line-height: 15px; }
    .list .leaf .txt.sel { background: #2a70d0; outline: 0; color: #000; }

    .editor { flex: 1; min-width: 0; display: flex; flex-direction: column; background: #fff; }
    .tabs { height: 21px; flex: none; display: flex; }
    .tabs button { width: 64px; border: 1px solid #d0d0d0; border-bottom: 0; border-top-color: #e4e4e4; padding-bottom: 1px; }
    .tabs i { flex: 1; border-bottom: 1px solid #d0d0d0; }
    .sheet { flex: 1; position: relative; border: 1px solid #dcdcdc; border-top: 0; padding: 3px 2px 2px 3px; display: flex; margin-right: 2px; }
    .frame { flex: 1; border: 1px solid #a0a0a0; padding: 1px; }
    table { border-collapse: separate; border-spacing: 0; table-layout: fixed; width: 369px; }
    th, td { border-right: 1px solid #c0c0c0; border-bottom: 1px solid #c0c0c0; height: 19px; padding: 0; font-weight: 400; text-align: left; line-height: 16px; overflow: hidden; }
    thead th { height: 23px; text-align: center; background: linear-gradient(#fff, #ececec); }
    thead .hot { background: linear-gradient(#f9d79b, #f2bd5c); color: #601060; }
    .c0 { width: 21px; } .c1 { width: 191px; } .c2 { width: 126px; } .c3 { width: 31px; }
    tbody th { text-align: center; background: linear-gradient(90deg, #fff, #ececec); }
    .nm { padding-left: 19px; }
    .val { padding-left: 2px; }
    .val .ico { width: 10px; height: 11px; display: inline-block; vertical-align: -2px; margin: 0 1px 0 2px; }
    .cb { text-align: center; }
    .cb input { appearance: none; width: 13px; height: 13px; border: 1px solid #333; background: #fff; display: block; margin: 0 auto; }
    .current th { background: #ffd58c; color: #601060; }
    .current .nm { background: #0078d7; color: #fff; }
    .current .val { background: #d9eaf9; }
    .key .nm { color: #0000f0; }
    .group .nm { color: #808080; padding-left: 2px; }
    .plus { width: 13px; height: 13px; border: 1px solid #bbb; margin-right: 4px; vertical-align: -2px; color: #000; display: inline-grid; place-items: center; }
    .plus svg { width: 9px; height: 9px; }
    .mark { position: absolute; left: 0; top: 169px; width: 358px; height: 37px; border: 7px solid #fb0000; pointer-events: none; }

    .status { height: 20px; flex: none; display: flex; gap: 2px; }
    .status span.cell { border: 1px solid #d8d8d8; background: linear-gradient(#fff, #f0f0f0); padding-left: 1px; line-height: 17px; }
    .s0 { width: 148px; } .s1 { width: 78px; } .s2 { width: 98px; } .s3 { width: 48px; }

    .ime { position: absolute; right: 0; bottom: 38px; height: 24px; width: 206px; display: flex; align-items: center; justify-content: space-between; padding-right: 3px;
      background: #fdfeff; border: 1px solid #c9dcee; border-right: 0; color: #1a73c8; z-index: 2; }
    .ime b { font-size: 16px; line-height: 20px; }
    .ime .ico.big { width: 28px; height: 28px; margin: -3px 0 -1px; }

    .taskbar { height: 40px; flex: none; display: flex; align-items: stretch; background: #020b0e; color: #fff; }
    .taskbar > button.start { width: 48px; background: #000; display: grid; place-items: center; }
    .cortana { width: 344px; background: #333; display: flex; align-items: center; padding: 0 13px 0 9px; gap: 6px; color: #a0a0a0; }
    .cortana i { width: 21px; height: 21px; border: 3px solid #fff; border-radius: 50%; }
    .cortana input { flex: 1; min-width: 0; font-size: 14px; outline: 0; }
    .cortana ::placeholder { color: #9c9c9c; }
    .cortana .ico { height: 17px; }
    .slots { display: flex; }
    .slots.quick { gap: 2px; }
    .slots.apps { margin-left: 8px; }
    .slot { width: 48px; display: grid; place-items: center; position: relative; }
    .slot .ico { width: 24px; height: 24px; }
    .slot.first .ico { width: 21px; height: 21px; }
    .slot.run::after { content: ""; position: absolute; left: 5px; right: 4px; bottom: 0; height: 2px; background: #76b9ed; }
    .slot.live { background: #39464a; }
    .slot.live::after { left: 0; right: 0; }
    .tray { flex: 1; display: flex; align-items: center; padding-left: 15px; }
    .tray .two { text-align: center; line-height: 17px; }
    .tray .cpu { width: 62px; margin-left: 12px; }
    .icons { display: flex; align-items: center; gap: 8px; margin-left: 11px; }
    .icons .wide { width: 24px; height: 22px; }
    .clock { width: 68px; margin-left: 10px; }
    .notice { margin-left: auto; padding-right: 19px; display: flex; }
    .notice .ico { width: 17px; height: 17px; }
    .peek { width: 5px; border-left: 1px solid #666; }
  `;

  private tool(t: Tool, off = false) {
    if (t.sep) return html`<span class="sep"></span>`;
    if (t.floor) return html`<label class="floor">楼层<span class="combo">
      <select><option>首层</option></select><span class="drop"><span class="arrow"></span></span></span></label>`;
    return html`<button class=${classMap({ tool: true, off, tight: !!t.tight, bare: !t.icon, boxed: !!t.boxed })}>
      ${t.icon ? icon(t.icon) : nothing}<span>${t.label}</span>${t.arrow ? html`<span class="arrow"></span>` : nothing}</button>`;
  }

  private chevron(open: boolean) {
    return html`<svg class="chev" viewBox="0 0 10 10" aria-hidden="true"><path fill="none" stroke=${open ? "#404040" : "#a0a0a0"}
      stroke-width=${open ? 1.8 : 1.3} d=${open ? "M1 3l4 4 4-4" : "M3 1l4 4-4 4"}></path></svg>`;
  }

  private group(g: Group) {
    return html`<li><div class="row root">${this.chevron(!!g.items)}<span class="hdots"></span>
      ${icon(g.items ? "folderOpen" : "folder")}<span class="txt">${g.name}</span></div>
      ${g.items ? html`<ul>${g.items.map(([ic, label]) => html`<li class="row"><span class="vdots trunk"></span>
        <span class="vdots branch"></span><span class="hdots twig"></span>${icon(ic)}
        <button class="txt ${this.kind === label ? "sel" : ""}" @click=${() => (this.kind = label)}>${mix(label)}</button></li>`)}</ul>` : nothing}</li>`;
  }

  render() {
    return html`
      <svg class="defs" aria-hidden="true"><defs>
        <linearGradient id="gold" x1="0" y1="0" x2="1" y2="1"><stop offset="0" stop-color="#fff0b4"></stop><stop offset="1" stop-color="#e0a02c"></stop></linearGradient>
        <linearGradient id="blue" x1="0" y1="0" x2="1" y2="1"><stop offset="0" stop-color="#6f9fe8"></stop><stop offset="1" stop-color="#eef6ff"></stop></linearGradient>
      </defs></svg>
      <header class="title">${icon("app")}
        <h1>广联达BIM钢筋算量软件 GGJ2013 - [C:\\Users\\Administrator.PC-20141127NRHM\\Desktop\\白龙村-2018-02-02-19-24-35(2666版).GGJ12]</h1>
        <div class="winbtns">
          <button aria-label="最小化"><svg viewBox="0 0 16 16"><path d="M3 7.500h10" stroke="#000"></path></svg></button>
          <button aria-label="还原"><svg viewBox="0 0 16 16"><path d="M3.500 4.500h7v8h-7zM5.500 4.500v-2h8v8h-3" fill="none" stroke="#000"></path></svg></button>
          <button aria-label="关闭"><svg viewBox="0 0 16 16"><path d="m3 2.500 10 10M13 2.500l-10 10" stroke="#000"></path></svg></button>
        </div>
      </header>
      <div class="ball">68</div>
      <div class="menubar">
        <nav>${menus.map((m) => html`<button>${m}</button>`)}
          <button class="extra">${icon("change")}新建变更<span class="arrow"></span></button>
          <button class="extra">${icon("robot")}广小二</button></nav>
        <a class="news" href="#">如何快速删除同一CAD?.</a>
        <div class="account"><button class="extra">${icon("user")}13907298339<span class="arrow"></span></button>
          <span>造价豆:0</span><button aria-label="消息">${icon("bell")}</button><span class="grow"></span><span class="more">»</span></div>
      </div>
      <div class="bar">
        <div class="strip file">
          <button aria-label="新建工程">${icon("newDoc")}</button>
          <button class="tool" aria-label="打开">${icon("open")}<span class="arrow"></span></button>
          <button aria-label="保存">${icon("save")}</button><span class="sep"></span>
          <button class="tool" aria-label="撤销">${icon("undo")}<span class="arrow"></span></button>
          <span class="grow"></span><span class="more">»</span></div>
        <div class="strip draw">${drawTools.map((t) => this.tool(t))}${drawToolsOff.map((t) => this.tool(t, true))}
          <span class="grow"></span><span class="more">»</span></div>
        <div class="strip view">${this.tool({ icon: "cube", label: "三维", arrow: true, boxed: true }, true)}
          ${viewTools.map((t) => this.tool(t, true))}<span class="grow"></span><span class="more">»</span></div>
      </div>
      <div class="body">
        <aside class="nav song">
          <h2><span>模块导航栏</span><button aria-label="固定">${icon("pin")}</button><button aria-label="关闭">${icon("cross")}</button></h2>
          <button class="page">工程设置</button>
          <button class="page open">绘图输入</button>
          <div class="exp"><button aria-label="全部展开">${icon("plusPlus")}</button><button aria-label="全部折叠">${icon("minusMinus")}</button></div>
          <ul class="tree">${tree.map((g) => this.group(g))}</ul>
          <button class="page">单构件输入</button>
          <button class="page">报表预览</button>
        </aside>
        <div class="work">
          <div class="strip">${partTools.map((t) => this.tool(t))}</div>
          <div class="panes song">
            <section class="parts">
              <div class="find"><input aria-label="搜索构件" placeholder="搜索构件..."><button aria-label="搜索">${icon("search")}</button></div>
              <div class="list">
                <div class="row root">${this.chevron(true)}<span class="hdots"></span>${icon("negative")}<span class="txt">板负筋</span></div>
                <ul>${parts.map((p) => html`<li class="row leaf"><span class="vdots branch"></span><span class="hdots twig"></span>${icon("gear")}
                  <button class="txt ${this.part === p ? "sel" : ""}" @click=${() => (this.part = p)}>${mix(p)}</button></li>`)}</ul>
              </div>
            </section>
            <section class="editor">
              <div class="tabs"><button>属性编辑</button><i></i></div>
              <div class="sheet"><div class="frame">
                <table>
                  <thead><tr><th class="c0"></th><th class="c1">属性名称</th><th class="c2 hot">属性值</th><th class="c3">附加</th></tr></thead>
                  <tbody>${props.map((p, i) => html`<tr class=${p.kind ?? ""}>
                    <th>${mix(String(i + 1))}</th>
                    <td class="nm">${p.kind === "group" ? html`<button class="plus" aria-label="展开"><svg viewBox="0 0 9 9"><path d="M4.500 1v7M1 4.500h7" stroke="#000"></path></svg></button>` : nothing}${mix(p.name)}</td>
                    <td class="val">${p.kind === "key" ? icon("rebar") : nothing}${mix(p.value)}</td>
                    <td class="cb">${p.box ? html`<input type="checkbox" aria-label=${"附加 " + p.name}>` : nothing}</td></tr>`)}</tbody>
                </table></div>
                <div class="mark"></div>
              </div>
            </section>
          </div>
        </div>
      </div>
      <footer class="status song"><span class="cell s0"></span><span class="cell s1">${mix("层高:4.5m")}</span><span class="cell s2">${mix("底标高:-0.05m")}</span>
        <span class="cell s3">${mix("0")}</span><span class="cell grow">名称在当前层当前构件类型下不允许重名</span></footer>
      <div class="ime">${icon("sogou", "big")}<b>中</b><b>°,</b>${icon("smile")}${icon("imeMic")}${icon("imeKeys")}${icon("person")}${icon("shirt")}${icon("wrench")}</div>
      <div class="taskbar">
        <button class="start" aria-label="开始">${icon("start")}</button>
        <label class="cortana"><i></i><input aria-label="搜索" placeholder="在这里输入你要搜索的内容">${icon("mic")}</label>
        <div class="slots quick"><button class="slot first" aria-label="任务视图">${icon("taskView")}</button>
          ${["pinwheel", "eWhite", "swirl"].map((n) => html`<button class="slot first" aria-label=${n}>${icon(n)}</button>`)}</div>
        <div class="slots apps">${["edge", "ie", "explorer", "gBlue", "eGreen", "notes", "app"].map((n, i) => html`
          <button class=${classMap({ slot: true, run: i > 2, live: i === 6 })} aria-label=${n}>${icon(n)}</button>`)}</div>
        <div class="tray"><span>链接</span><div class="two cpu">39%<br>CPU使用</div>
          <div class="icons">${icon("chevUp")}${icon("battery")}${icon("wifi")}${icon("volume")}${icon("keys", "wide")}<span>中</span>&nbsp;${icon("sogou")}</div>
          <div class="two clock">8:39<br>2018/5/19</div>
          <button class="notice" aria-label="通知">${icon("notice")}</button></div>
        <span class="peek"></span>
      </div>`;
  }
}
